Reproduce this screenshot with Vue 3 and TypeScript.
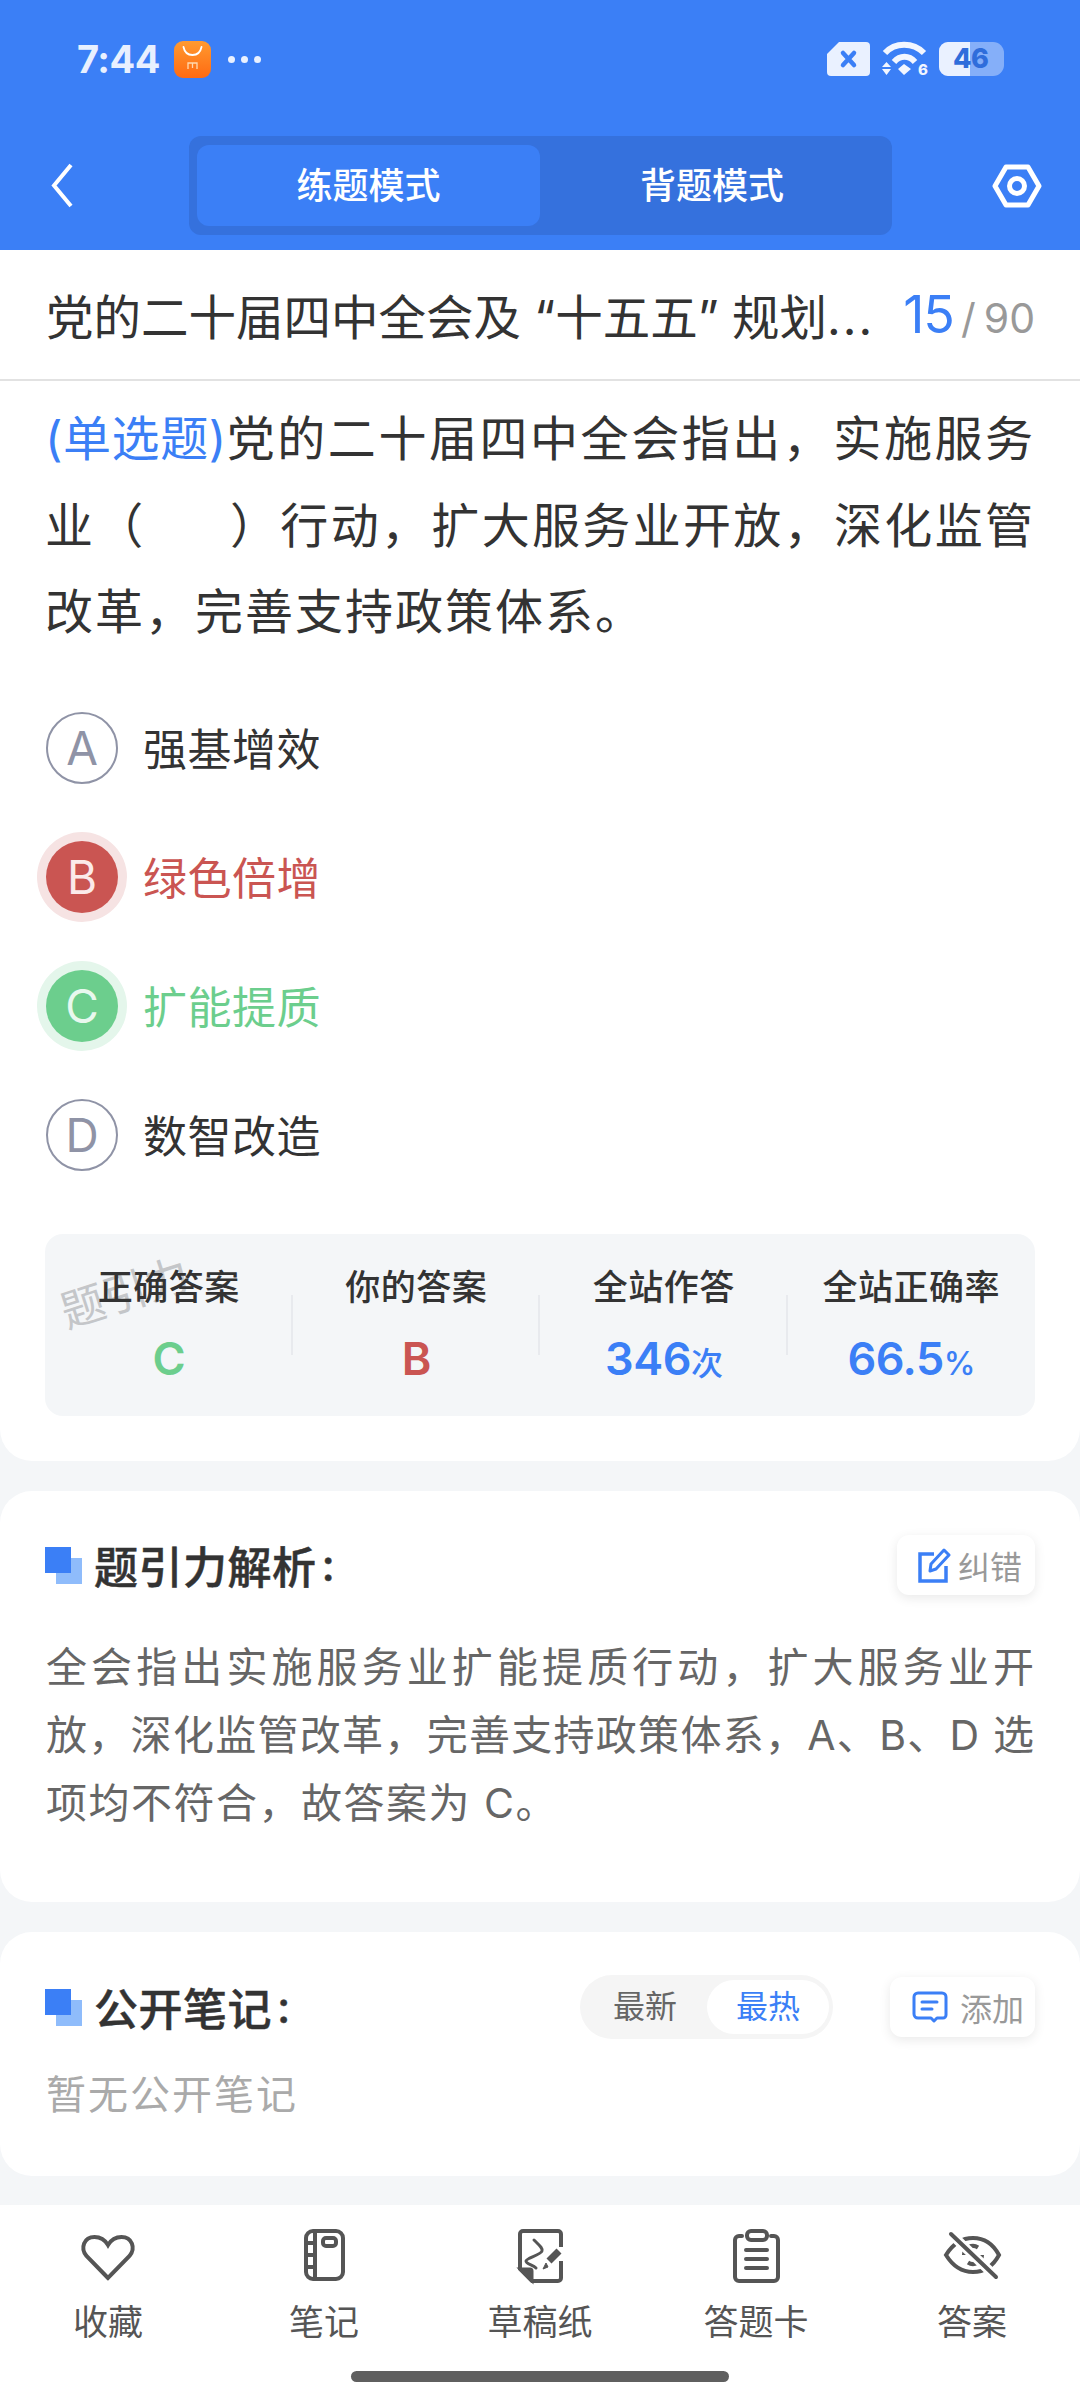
<template>
  <div class="page">
    <header class="top">
      <div class="status">
        <div class="status-left">
          <span class="time">7:44</span>
          <span class="app-icon">
            <svg width="37" height="37" viewBox="0 0 37 37" fill="none">
              <path d="M9.500 6c1 5 4 8 9 8s8-3 9-8" stroke="#fff" stroke-width="1.800" stroke-linecap="round" />
              <path d="M14 28v-6h9v6M18.500 22v5" stroke="#ffd9b0" stroke-width="1.300" />
            </svg>
          </span>
          <span class="dots"><i></i><i></i><i></i></span>
        </div>
        <div class="status-right">
          <svg width="43" height="34" viewBox="0 0 43 34">
            <path d="M12 0h27a4 4 0 0 1 4 4v26a4 4 0 0 1-4 4H4a4 4 0 0 1-4-4V12z" fill="#eaf1ff" />
            <path d="M16 11l11 12M27 11L16 23" stroke="#3b7ff6" stroke-width="4.500" stroke-linecap="round" />
          </svg>
          <svg class="wifi" width="47" height="34" viewBox="0 0 47 34" fill="none">
            <path d="M4 11C14 0 32 0 43 11" stroke="#f2f6ff" stroke-width="6" />
            <path d="M13 20c6-7 15-7 21 0" stroke="#f2f6ff" stroke-width="6" />
            <path d="M17 27l6-5 7 5-7 6zM1 25l4.500-5 4.500 5zM1 27h9l-4.500 6z" fill="#f2f6ff" />
            <text x="37" y="33" class="wifi-six">6</text>
          </svg>
          <div class="battery">
            <span class="battery-fill"></span>
            <span class="battery-num">46</span>
          </div>
        </div>
      </div>
      <nav class="nav">
        <svg class="back" width="25" height="45" viewBox="0 0 25 45" fill="none">
          <path d="M21 2L4 22.500 21 43" stroke="#fff" stroke-width="4" />
        </svg>
        <div class="mode-tabs">
          <button class="mode active">练题模式</button>
          <button class="mode">背题模式</button>
        </div>
        <svg class="gear" width="50" height="44" viewBox="0 0 50 44" fill="none">
          <path d="M14 3h22l11 19-11 19H14L3 22z" stroke="#fff" stroke-width="5" stroke-linejoin="round" />
          <circle cx="25" cy="22" r="7.500" stroke="#fff" stroke-width="5" />
        </svg>
      </nav>
    </header>

    <main class="body">
      <section class="card question-card">
        <div class="title-row">
          <span class="paper-title">党的二十届四中全会及 “十五五” 规划<i>...</i></span>
          <span class="progress"><b>15</b><i>/</i>90</span>
        </div>
        <p class="stem">
          <span class="kind">(单选题)</span>党的二十届四中全会指出，实施服务业（<span class="blank"></span>）行动，扩大服务业开放，深化监管改革，完善支持政策体系。
        </p>
        <ul class="options">
          <li v-for="opt in options" :key="opt.key" class="option" :class="opt.state">
            <span class="letter">{{ opt.key }}</span>
            <span class="option-text">{{ opt.text }}</span>
          </li>
        </ul>
        <div class="stats">
          <span class="watermark">题引力</span>
          <div v-for="s in stats" :key="s.label" class="stat">
            <div class="stat-label">{{ s.label }}</div>
            <div class="stat-value" :class="s.tone">{{ s.value }}<small v-if="s.unit">{{ s.unit }}</small></div>
          </div>
        </div>
      </section>

      <section class="card analysis-card">
        <div class="card-head">
          <h2 class="card-title"><span class="mark"></span>题引力解析<em>:</em></h2>
          <button class="mini-btn">
            <svg width="34" height="36" viewBox="0 0 34 36" fill="none">
              <path d="M17 7H3v27h26V19" stroke="#3b7ff6" stroke-width="3.500" />
              <path d="M13 24l1-7L27 3l5 5-13 14z" stroke="#3b7ff6" stroke-width="3" stroke-linejoin="round" />
            </svg>
            <span>纠错</span>
          </button>
        </div>
        <div class="analysis">
          <p v-for="line in analysisLines" :key="line">{{ line }}</p>
        </div>
      </section>

      <section class="card notes-card">
        <div class="card-head">
          <h2 class="card-title"><span class="mark"></span>公开笔记<em>:</em></h2>
          <div class="head-actions">
            <div class="sort">
              <span class="sort-item">最新</span>
              <span class="sort-item on">最热</span>
            </div>
            <button class="mini-btn add">
              <svg width="36" height="32" viewBox="0 0 36 32" fill="none">
                <path d="M6 2h24a4 4 0 0 1 4 4v18a3 3 0 0 1-3 3h-6l-3 3-3-3H6a4 4 0 0 1-4-4V6a4 4 0 0 1 4-4z" stroke="#3b7ff6" stroke-width="3" stroke-linejoin="round" />
                <path d="M10 11h15M10 18h10" stroke="#3b7ff6" stroke-width="3" stroke-linecap="round" />
              </svg>
              <span>添加</span>
            </button>
          </div>
        </div>
        <p class="empty">暂无公开笔记</p>
      </section>
    </main>

    <footer class="tabbar">
      <div class="tabs">
        <div class="tab">
          <svg width="60" height="60" viewBox="0 0 60 60" fill="none">
            <path d="M30 51L8.500 29C2 21 6 10 16.500 10 22 10 27 13 30 18 33 13 38 10 43.500 10 54 10 58 21 51.500 29z" class="ic" />
          </svg>
          <span>收藏</span>
        </div>
        <div class="tab">
          <svg width="60" height="60" viewBox="0 0 60 60" fill="none">
            <rect x="12" y="4" width="37" height="48" rx="7" class="ic" />
            <path d="M21 4v48M12 16h9M12 28h9M12 40h9" class="ic" />
            <rect x="29" y="11" width="13" height="8" rx="3" class="ic" />
          </svg>
          <span>笔记</span>
        </div>
        <div class="tab">
          <svg width="60" height="60" viewBox="0 0 60 60" fill="none">
            <path d="M51 20V7a3 3 0 0 0-3-3H13a3 3 0 0 0-3 3v35l12 12h26a3 3 0 0 0 3-3V34" class="ic" />
            <path d="M10 42h10a2 2 0 0 1 2 2v10z" fill="#555" stroke="#555" stroke-width="3" />
            <path d="M24 13c5 5 9 8 8 11-1 4-16 7-16 10 0 3 7 4 10 7" stroke="#555" stroke-width="3" stroke-linecap="round" />
            <path d="M49 24L39 34" stroke="#555" stroke-width="7" />
            <path d="M36 36l-3 6 5-2z" fill="#555" stroke="#555" />
          </svg>
          <span>草稿纸</span>
        </div>
        <div class="tab">
          <svg width="60" height="60" viewBox="0 0 60 60" fill="none">
            <path d="M16 9h-3a4 4 0 0 0-4 4v37a4 4 0 0 0 4 4h35a4 4 0 0 0 4-4V13a4 4 0 0 0-4-4h-3" class="ic" stroke-linecap="round" />
            <rect x="21" y="4" width="20" height="9" rx="4" class="ic" />
            <path d="M20 23h21M20 32h21M20 41h21" class="ic" stroke-linecap="round" />
          </svg>
          <span>答题卡</span>
        </div>
        <div class="tab">
          <svg width="60" height="60" viewBox="0 0 60 60" fill="none">
            <path d="M4 28C12 15 22 11 31 11c9 0 19 4 26 17-7 13-17 17-26 17-9 0-19-4-27-17z" class="ic" />
            <path d="M22 28a9 9 0 0 1 14-7.500M40 28a9 9 0 0 1-14 7.500" class="ic" />
            <path d="M9 7l45 43" stroke="#fff" stroke-width="10" />
            <path d="M9 7l45 43" class="ic" stroke-linecap="round" />
          </svg>
          <span>答案</span>
        </div>
      </div>
      <div class="home-bar"></div>
    </footer>
  </div>
</template>

<script setup lang="ts">
type Option = {
  key: string
  text: string
  state: '' | 'wrong' | 'right'
}

type Stat = {
  label: string
  value: string
  unit?: string
  tone: string
}

const options: Option[] = [
  { key: 'A', text: '强基增效', state: '' },
  { key: 'B', text: '绿色倍增', state: 'wrong' },
  { key: 'C', text: '扩能提质', state: 'right' },
  { key: 'D', text: '数智改造', state: '' },
]

const stats: Stat[] = [
  { label: '正确答案', value: 'C', tone: 'green' },
  { label: '你的答案', value: 'B', tone: 'red' },
  { label: '全站作答', value: '346', unit: '次', tone: 'blue' },
  { label: '全站正确率', value: '66.5', unit: '%', tone: 'blue' },
]

const analysisLines = [
  '全会指出实施服务业扩能提质行动，扩大服务业开',
  '放，深化监管改革，完善支持政策体系，A、B、D 选',
  '项均不符合，故答案为 C。',
]
</script>

<style>
html,
body {
  margin: 0;
  background: #f4f6f8;
}
</style>

<style scoped>
.page {
  width: 1080px;
  height: 2400px;
  display: flex;
  flex-direction: column;
  overflow: hidden;
  background: #f4f6f8;
  font-family: Inter, "Noto Sans CJK SC", sans-serif;
  color: #333;
}

.top {
  background: #3b7ff6;
  height: 250px;
  flex: none;
}

.status {
  height: 118px;
  padding: 0 76px 0 77px;
  display: flex;
  justify-content: space-between;
  align-items: center;
}

.status-left,
.status-right {
  display: flex;
  align-items: center;
}

.time {
  font-size: 38px;
  font-weight: 700;
  color: #e8f0ff;
  letter-spacing: -0.500px;
  width: 97px;
}

.app-icon {
  width: 37px;
  height: 37px;
  border-radius: 9px;
  background: linear-gradient(180deg, #ff9a30, #ff6a12);
  display: block;
}

.app-icon svg {
  display: block;
}

.dots {
  display: flex;
  gap: 6px;
  margin-left: 17px;
}

.dots i {
  width: 7px;
  height: 7px;
  border-radius: 50%;
  background: #eaf1ff;
}

.status-right {
  gap: 11px;
}

.wifi {
  overflow: visible;
}

.wifi-six {
  font-size: 15px;
  font-weight: 800;
  fill: #f2f6ff;
}

.battery {
  position: relative;
  width: 65px;
  height: 34px;
  border-radius: 9px 11px 11px 9px;
  background: rgba(255, 255, 255, 0.38);
  overflow: hidden;
}

.battery-fill {
  position: absolute;
  left: 0;
  top: 0;
  bottom: 0;
  width: 31px;
  background: #eaf1ff;
}

.battery-num {
  position: absolute;
  left: 14px;
  top: 0;
  font-size: 27px;
  line-height: 34px;
  font-weight: 800;
  letter-spacing: -0.500px;
  color: #2f6ddb;
}

.nav {
  display: grid;
  grid-template-columns: 189px 703px 1fr;
  height: 99px;
  margin-top: 18px;
  align-items: center;
}

.back {
  margin-left: 50px;
}

.gear {
  margin-left: 100px;
}

.mode-tabs {
  height: 99px;
  box-sizing: border-box;
  padding: 9px 8px;
  border-radius: 12px;
  background: #3571dd;
  display: grid;
  grid-template-columns: 343px 1fr;
}

.mode {
  border: 0;
  background: transparent;
  color: #fff;
  font: inherit;
  font-size: 36px;
  font-weight: 500;
  border-radius: 12px;
  padding: 0 0 5px;
}

.mode.active {
  background: #3b7ff6;
}

.body {
  flex: 1;
  display: flex;
  flex-direction: column;
  gap: 30px;
  min-height: 0;
}

.card {
  background: #fff;
  border-radius: 32px;
}

.question-card {
  border-radius: 0 0 32px 32px;
  height: 1211px;
  box-sizing: border-box;
}

.title-row {
  height: 131px;
  box-sizing: border-box;
  padding: 0 45px 0 46px;
  border-bottom: 2px solid #e2e2e2;
  display: flex;
  justify-content: space-between;
  align-items: center;
}

.paper-title {
  font-size: 47.500px;
  white-space: nowrap;
}

.paper-title i {
  font-style: normal;
  letter-spacing: 2px;
}

.progress {
  font-size: 41px;
  color: #999;
  white-space: nowrap;
}

.progress b {
  font-size: 52px;
  font-weight: 400;
  letter-spacing: -1px;
  color: #3b7ff6;
}

.progress i {
  font-style: normal;
  margin: 0 8px 0 7px;
}

.stem {
  margin: 15px 45px 0 45px;
  font-size: 48px;
  line-height: 86.500px;
  letter-spacing: 2px;
  text-align: justify;
}

.kind {
  color: #3b7ff6;
  letter-spacing: 0;
}

.blank {
  display: inline-block;
  width: 84px;
}

.options {
  list-style: none;
  margin: 56px 0 0;
  padding: 0 0 0 46px;
  display: flex;
  flex-direction: column;
  gap: 57px;
}

.option {
  display: flex;
  align-items: center;
  height: 72px;
}

.letter {
  width: 72px;
  height: 72px;
  box-sizing: border-box;
  border: 2px solid #8f93a6;
  border-radius: 50%;
  display: flex;
  align-items: center;
  justify-content: center;
  font-size: 46px;
  color: #8f93a6;
}

.option-text {
  margin-left: 25px;
  padding-bottom: 2px;
  font-size: 44px;
  letter-spacing: 0.500px;
}

.option.wrong .letter {
  background: #ca5552;
  border: 0;
  color: #fbeaea;
  box-shadow: 0 0 0 9px #f6e3e3;
}

.option.wrong .option-text {
  color: #ca5552;
}

.option.right .letter {
  background: #6cce8d;
  border: 0;
  color: #e8f8ee;
  box-shadow: 0 0 0 9px #e4f6eb;
}

.option.right .option-text {
  color: #6cce8d;
}

.stats {
  position: relative;
  margin: 63px 45px 0;
  height: 182px;
  border-radius: 18px;
  background: #f4f6f8;
  display: grid;
  grid-template-columns: repeat(4, 1fr);
  padding-top: 29px;
  box-sizing: border-box;
}

.watermark {
  position: absolute;
  left: 13px;
  top: 24px;
  font-size: 44px;
  color: #c4c6c9;
  transform: rotate(-18deg);
}

.stat {
  position: relative;
  text-align: center;
}

.stat + .stat::before {
  content: '';
  position: absolute;
  left: -2px;
  top: 32px;
  height: 60px;
  width: 2px;
  background: #e8eaee;
}

.stat-label {
  position: relative;
  font-size: 35px;
  line-height: 48px;
  font-weight: 500;
  letter-spacing: 0.500px;
}

.stat-value {
  margin-top: 20px;
  font-size: 45px;
  line-height: 56px;
  font-weight: 600;
  letter-spacing: -0.500px;
}

.stat-value small {
  font-size: 32px;
  font-weight: 500;
}

.green {
  color: #6cce8d;
}

.red {
  color: #ca5552;
}

.blue {
  color: #3b7ff6;
}

.analysis-card {
  height: 411px;
  box-sizing: border-box;
  padding: 44px 45px 0 46px;
}

.card-head {
  display: flex;
  justify-content: space-between;
  align-items: center;
  height: 60px;
}

.card-title {
  margin: 0;
  display: flex;
  align-items: center;
  font-size: 44px;
  font-weight: 500;
  -webkit-text-stroke: 0.500px #333;
  letter-spacing: 0.500px;
  color: #333;
}

.card-title em {
  font-style: normal;
  margin-left: 5px;
}

.mark {
  position: relative;
  width: 37px;
  height: 37px;
  margin: 0 12px 0 -1px;
  flex: none;
}

.mark::before,
.mark::after {
  content: '';
  position: absolute;
  width: 26px;
  height: 26px;
}

.mark::before {
  right: 0;
  bottom: 0;
  background: #8fbcfb;
}

.mark::after {
  left: 0;
  top: 0;
  background: #3b7ff6;
}

.mini-btn {
  border: 0;
  background: #fff;
  box-shadow: 0 3px 12px rgba(0, 0, 0, 0.09);
  border-radius: 12px;
  height: 60px;
  width: 138px;
  padding: 0 0 0 20px;
  display: flex;
  align-items: center;
  gap: 7px;
  font: inherit;
  font-size: 32px;
  color: #999;
}

.mini-btn.add {
  width: 145px;
  padding-left: 22px;
  gap: 12px;
}

.analysis {
  margin-top: 38px;
  font-size: 41px;
  line-height: 68px;
  letter-spacing: 1px;
  color: #666;
}

.analysis p {
  margin: 0;
  white-space: nowrap;
  text-align: justify;
  text-align-last: justify;
}

.analysis p:last-child {
  text-align-last: left;
  letter-spacing: 1.500px;
}

.notes-card {
  height: 244px;
  box-sizing: border-box;
  padding: 45px 45px 0 46px;
}

.head-actions {
  display: flex;
  align-items: center;
  gap: 57px;
}

.sort {
  width: 253px;
  height: 64px;
  box-sizing: border-box;
  padding: 5px 4px 5px 3px;
  border-radius: 32px;
  background: #f5f5f5;
  display: grid;
  grid-template-columns: 1fr 122px;
  align-items: center;
  font-size: 32px;
  color: #666;
  text-align: center;
}

.sort-item {
  line-height: 54px;
  border-radius: 27px;
}

.sort-item.on {
  background: #fff;
  color: #3b7ff6;
}

.empty {
  margin: 26px 0 0;
  font-size: 40px;
  letter-spacing: 2px;
  color: #aaa;
}

.tabbar {
  flex: none;
  height: 195px;
  background: #fff;
  box-sizing: border-box;
  padding-top: 22px;
}

.tabs {
  display: grid;
  grid-template-columns: repeat(5, 1fr);
}

.tab {
  display: flex;
  flex-direction: column;
  align-items: center;
  font-size: 35px;
  line-height: 44px;
  color: #555;
}

.tab svg {
  margin-bottom: 13px;
}

.ic {
  stroke: #555;
  stroke-width: 4;
}

.home-bar {
  width: 378px;
  height: 11px;
  margin: 27px auto 0;
  border-radius: 6px;
  background: #5f5f5f;
}
</style>
